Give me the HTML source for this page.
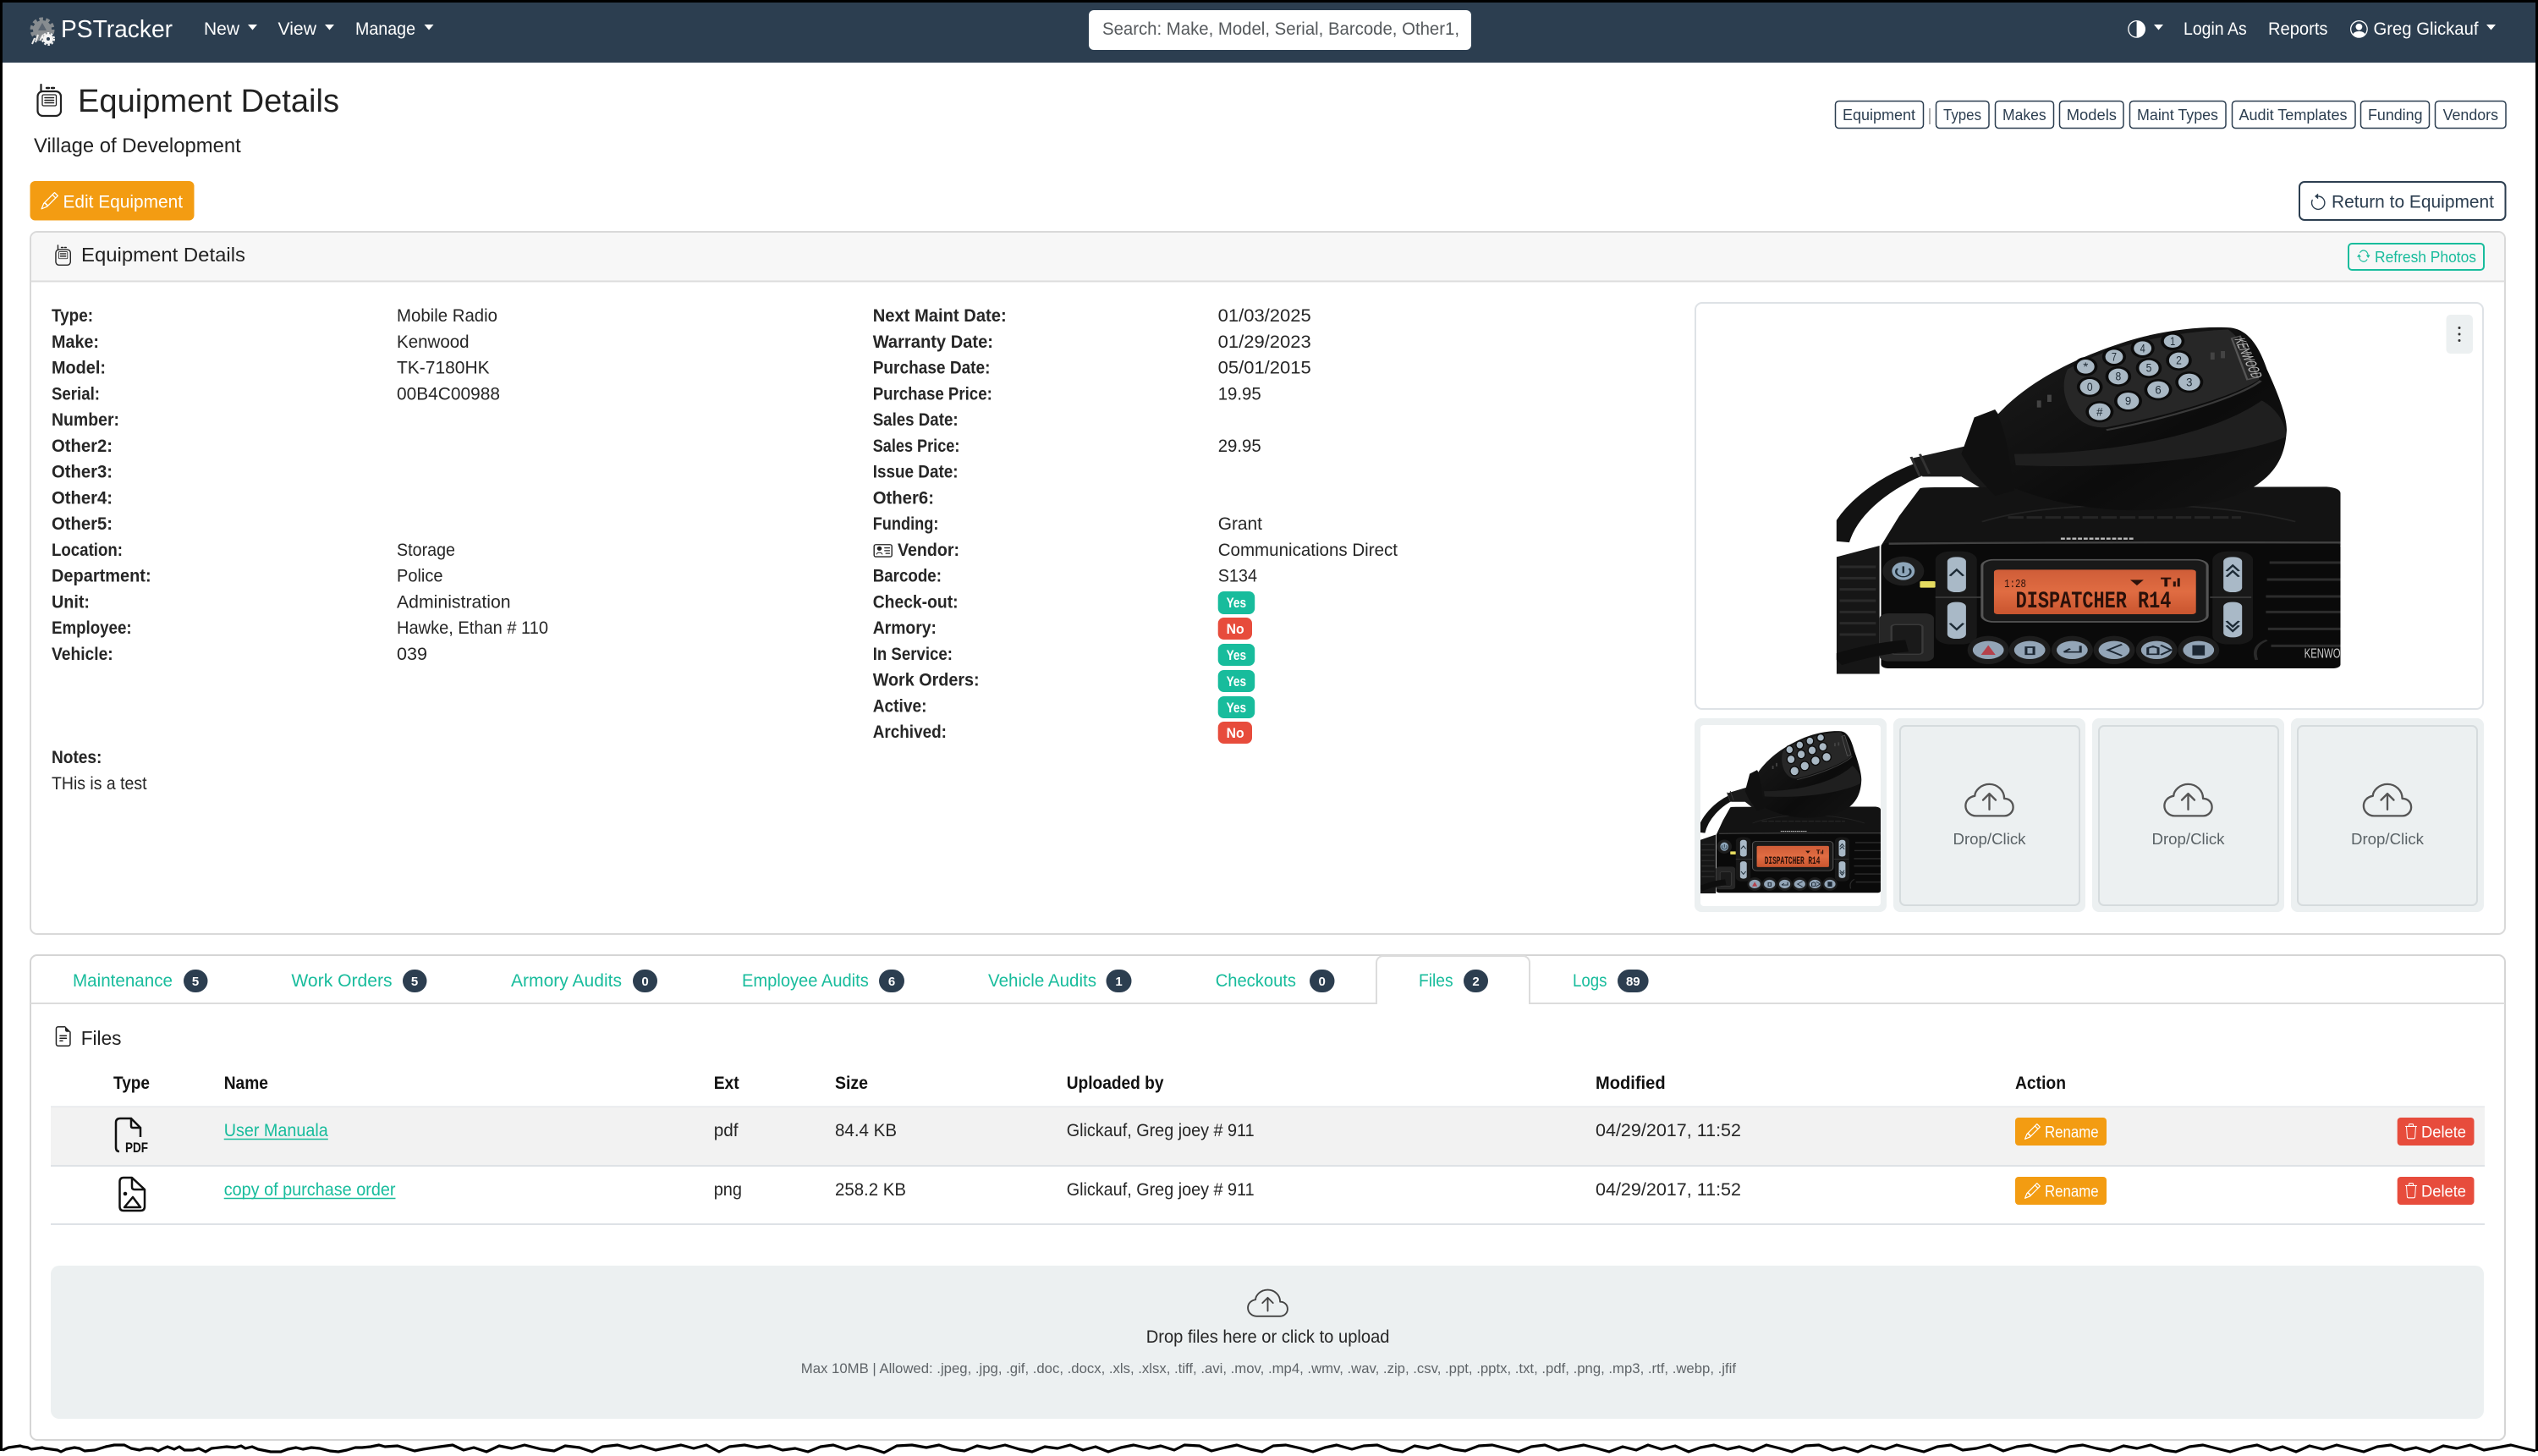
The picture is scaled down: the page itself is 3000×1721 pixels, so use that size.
<!DOCTYPE html>
<html lang="en">
<head>
<meta charset="utf-8">
<title>PSTracker - Equipment Details</title>
<style>
html,body{margin:0;padding:0;background:#fff;width:3000px;height:1721px;overflow:hidden}
svg{display:block}
path{fill-rule:evenodd}
text{font-family:"Liberation Sans",sans-serif;font-size:21.5px;fill:#262626}
.b{font-weight:700}
.n{fill:#fff}
.t{fill:#18bc9c}
.o{font-size:18.5px;fill:#2c3e50}
.h{font-weight:700;fill:#111;font-size:21px}
.bd{font-weight:700;font-size:15px;fill:#fff;text-anchor:middle}
.yn{font-weight:700;font-size:16.5px;fill:#fff}
.w{fill:#fff;font-size:19px}
.d{font-size:18.5px;fill:#5a6266}
.k{font-size:42px;fill:#1f2b35;text-anchor:middle}
</style>
</head>
<body>
<svg xmlns="http://www.w3.org/2000/svg" width="3000" height="1721" viewBox="0 0 3000 1721">
<defs>
<linearGradient id="lcd" x1="0" y1="0" x2="0" y2="1"><stop offset="0" stop-color="#cf5d38"/><stop offset=".5" stop-color="#e06c42"/><stop offset="1" stop-color="#c9552f"/></linearGradient>
<linearGradient id="mic" x1="0" y1="0" x2="1" y2="1"><stop offset="0" stop-color="#1c1c1c"/><stop offset=".6" stop-color="#0c0c0c"/><stop offset="1" stop-color="#141414"/></linearGradient>
<clipPath id="rc"><rect x="279" y="100" width="973" height="1240"/></clipPath>
<g id="cloud" fill="none" stroke-linecap="round" stroke-linejoin="round">
<path d="M4.730 3.720C5.600 2.970 6.750 2.500 8 2.500c2.600 0 4.690 2.020 4.690 4.550 1.600 0 2.810 1.100 2.810 2.720 0 1.500-1.250 2.730-2.810 2.730H3.780C1.950 12.500.5 11.080.5 9.320c0-1.600 1.200-2.850 2.900-3.100 0-.85.5-1.750 1.330-2.500z"/>
<path d="M8 10.500V5.500M6 7.500l2-2 2 2"/>
</g>
<path id="pencil" d="M12.146.146a.5.5 0 0 1 .708 0l3 3a.5.5 0 0 1 0 .708l-10 10a.5.5 0 0 1-.168.11l-5 2a.5.5 0 0 1-.65-.65l2-5a.5.5 0 0 1 .11-.168zM11.207 2.5 13.5 4.793 14.793 3.5 12.5 1.207zm1.586 3L10.5 3.207 4 9.707V10h.5a.5.5 0 0 1 .5.5v.5h.5a.5.5 0 0 1 .5.5v.5h.293zm-9.761 5.175-.106.106-1.528 3.821 3.821-1.528.106-.106A.5.5 0 0 1 5 12.5V12h-.5a.5.5 0 0 1-.5-.5V11h-.5a.5.5 0 0 1-.468-.325"/>
<path id="trash" d="M6.5 1h3a.5.5 0 0 1 .5.5v1H6v-1a.5.5 0 0 1 .5-.5M11 2.5v-1A1.5 1.5 0 0 0 9.5 0h-3A1.5 1.5 0 0 0 5 1.5v1H1.5a.5.5 0 0 0 0 1h.538l.853 10.66A2 2 0 0 0 4.885 16h6.23a2 2 0 0 0 1.994-1.84l.853-10.66h.538a.5.5 0 0 0 0-1zm1.958 1-.846 10.58a1 1 0 0 1-.997.92h-6.23a1 1 0 0 1-.997-.92L3.042 3.5z"/>
<g id="talkie" fill="none" stroke="#222" stroke-width="2.200" stroke-linecap="round" stroke-linejoin="round">
<path d="M5.500 0V7"/><path d="M12 4h3M18 4h3" stroke-width="2.400"/>
<rect x="1.500" y="8" width="27.500" height="29" rx="6"/>
<rect x="7" y="12" width="16.500" height="13" rx="1.500" stroke-width="1.300"/>
<path d="M10 15.500h10.500M10 18.500h10.500M10 21.500h10.500" stroke-width="1.500"/>
</g>
<g id="radio" clip-path="url(#rc)">
<path d="M445 610C370 660 300 760 282 870" fill="none" stroke="#121212" stroke-width="44"/>
<path d="M279 925L362 885V1340H279z" fill="#161616"/>
<path d="M285 960H355M285 1000H355M285 1040H355M285 1080H355M285 1120H355M285 1160H355M285 1200H355" stroke="#2a2a2a" stroke-width="9"/>
<path d="M425 575L545 525L600 705L580 705L520 640L445 640z" fill="#1a1a1a"/>
<path d="M423 570L440 640M440 560L458 630" stroke="#333" stroke-width="5"/>
<path d="M440 682Q445 678 470 678L1225 676Q1252 680 1252 700V885H365L400 780z" fill="#131313"/>
<path d="M560 800C700 720 1000 720 1165 800" fill="none" stroke="#232323" stroke-width="5"/>
<path d="M610 785H1060" stroke="#262626" stroke-width="9" stroke-dasharray="30 6"/>
<rect x="365" y="875" width="887" height="445" rx="14" fill="#0a0a0a"/>
<path d="M380 878Q700 872 1252 874" fill="none" stroke="#424242" stroke-width="7"/>
<path d="M712 860H852" stroke="#bbb" stroke-width="7" stroke-dasharray="8 3"/>
<path d="M545 430L585 402L622 500V690L585 708L540 620L520 560z" fill="#101010"/>
<path d="M590 420C640 320 720 230 840 160C900 125 980 105 1040 112C1075 120 1095 180 1110 260C1130 340 1150 430 1148 480C1145 560 1130 620 1090 670C1040 730 960 755 860 760C770 760 690 730 620 680C615 600 610 500 590 420z" fill="url(#mic)"/>
<path d="M725 260C790 190 900 130 1035 118C1060 150 1090 240 1095 295C1060 345 930 420 800 465C770 470 745 445 730 400C715 350 715 300 725 260z" fill="#272727"/>
<path d="M1100 370C1130 400 1150 460 1145 500C1100 540 900 620 625 600L622 560C800 560 1000 500 1100 370z" fill="#1f1f1f"/>
<path d="M1098 300C1060 355 930 430 800 475" fill="none" stroke="#3a3a3a" stroke-width="6"/>
<g fill="#0c0c0c">
<ellipse cx="928" cy="160" rx="23" ry="33"/><ellipse cx="870" cy="185" rx="23" ry="34"/><ellipse cx="815" cy="215" rx="23" ry="34"/><ellipse cx="760" cy="250" rx="23" ry="34"/>
<ellipse cx="940" cy="228" rx="25" ry="36"/><ellipse cx="882" cy="255" rx="25" ry="36"/><ellipse cx="823" cy="285" rx="25" ry="36"/><ellipse cx="768" cy="322" rx="25" ry="36"/>
<ellipse cx="960" cy="305" rx="27" ry="38"/><ellipse cx="900" cy="332" rx="27" ry="38"/><ellipse cx="842" cy="372" rx="27" ry="38"/><ellipse cx="787" cy="410" rx="27" ry="38"/>
</g>
<g fill="#a9b8c4">
<ellipse cx="928" cy="160" rx="17" ry="23"/><ellipse cx="870" cy="185" rx="17" ry="25"/><ellipse cx="815" cy="215" rx="17" ry="25"/><ellipse cx="760" cy="250" rx="17" ry="25"/>
<ellipse cx="940" cy="228" rx="19" ry="28"/><ellipse cx="882" cy="255" rx="19" ry="28"/><ellipse cx="823" cy="285" rx="19" ry="28"/><ellipse cx="768" cy="322" rx="19" ry="28"/>
<ellipse cx="960" cy="305" rx="21" ry="30"/><ellipse cx="900" cy="332" rx="21" ry="30"/><ellipse cx="842" cy="372" rx="21" ry="30"/><ellipse cx="787" cy="410" rx="21" ry="30"/>
</g>
<path d="M1042 150L1058 142L1092 288L1072 296z" fill="none" stroke="#555" stroke-width="4"/>
<path d="M1005 200V225M1025 195V220M670 370V395M690 350V375" stroke="#444" stroke-width="8"/>
<rect x="362" y="1125" width="105" height="170" rx="18" fill="#262626"/>
<rect x="385" y="1165" width="60" height="105" rx="8" fill="#1a1a1a" stroke="#3a3a3a" stroke-width="4"/>
<path d="M415 1240Q350 1250 279 1290" fill="none" stroke="#0e0e0e" stroke-width="42"/>
<ellipse cx="408" cy="975" rx="40" ry="52" fill="#1d1d1d"/>
<ellipse cx="408" cy="975" rx="22" ry="32" fill="#8ea6ba"/>
<path d="M408 958V982M397 966a14 18 0 1 0 22 0" fill="none" stroke="#1b2a35" stroke-width="4"/>
<rect x="440" y="1011" width="30" height="23" rx="3" fill="#e6dc60"/>
<rect x="470" y="905" width="80" height="330" rx="30" fill="#181818"/>
<rect x="1005" y="905" width="78" height="330" rx="30" fill="#181818"/>
<rect x="493" y="925" width="36" height="125" rx="16" fill="#a9b9c7"/>
<rect x="493" y="1085" width="36" height="130" rx="16" fill="#a9b9c7"/>
<rect x="1026" y="925" width="36" height="125" rx="16" fill="#a9b9c7"/>
<rect x="1026" y="1085" width="36" height="125" rx="16" fill="#a9b9c7"/>
<path d="M498 992L511 970L524 992M498 1160L511 1182L524 1160M1032 975L1044 955L1056 975M1032 995L1044 975L1056 995M1032 1152L1044 1172L1056 1152M1032 1168L1044 1188L1056 1168" fill="none" stroke="#1c2a35" stroke-width="5"/>
<path d="M470 1068H560M1000 1068H1080" stroke="#3a3a3a" stroke-width="5"/>
<rect x="560" y="935" width="435" height="220" rx="22" fill="#191919" stroke="#555" stroke-width="5"/>
<rect x="583" y="970" width="390" height="158" rx="8" fill="url(#lcd)"/>
<path d="M846 1006H872L859 1026z" fill="#2b110a"/>
<path d="M905 998H925V1004H918V1030H912V1004H905zM929 1012H934V1030H929zM937 1000H942V1030H937z" fill="#2b110a"/>
<path d="M1115 945H1252M1110 1005H1252M1108 1065H1252M1108 1120H1252M1112 1180H1252M1118 1240H1252" stroke="#2c2c2c" stroke-width="9"/>
<path d="M1090 1290Q1080 1240 1110 1220" fill="none" stroke="#2a2a2a" stroke-width="6"/>
<g fill="#1d1d1d">
<ellipse cx="572" cy="1255" rx="40" ry="50"/><ellipse cx="652" cy="1255" rx="40" ry="50"/><ellipse cx="734" cy="1255" rx="40" ry="50"/><ellipse cx="815" cy="1255" rx="40" ry="50"/><ellipse cx="897" cy="1255" rx="40" ry="50"/><ellipse cx="978" cy="1255" rx="40" ry="50"/>
</g>
<g fill="#93a5b7">
<ellipse cx="572" cy="1255" rx="30" ry="32"/><ellipse cx="652" cy="1255" rx="30" ry="32"/><ellipse cx="734" cy="1255" rx="30" ry="32"/><ellipse cx="815" cy="1255" rx="30" ry="32"/><ellipse cx="897" cy="1255" rx="30" ry="32"/><ellipse cx="978" cy="1255" rx="30" ry="32"/>
</g>
<path d="M572 1238L558 1272H586z" fill="#b5414b"/>
<path d="M645 1245H660V1270H645zM718 1262H750V1240M718 1262L730 1250M830 1235L803 1255L830 1275M880 1270V1248L890 1242L900 1248V1270zM905 1238L925 1255L905 1272" fill="none" stroke="#1c2733" stroke-width="5"/>
<rect x="966" y="1238" width="24" height="36" fill="#1c2733"/>
</g>
</defs>

<!-- page frame -->
<rect x="0" y="0" width="3000" height="1721" fill="#fff"/>

<!-- navbar -->
<rect x="3" y="3" width="2994" height="71" fill="#2c3e50"/>
<g>
<circle cx="50" cy="35" r="11" fill="#878c90"/>
<circle cx="50" cy="35" r="12.500" fill="none" stroke="#878c90" stroke-width="4" stroke-dasharray="4.500 3.350"/>
<path d="M45 36L50 27L55 36z" fill="#5a6470"/>
<path d="M41 45L38 52M45 41L42 50M51 41L47 48" stroke="#e8e8e8" stroke-width="2"/>
<circle cx="57" cy="46" r="6" fill="#f4f4f4"/>
<circle cx="57" cy="46" r="7" fill="none" stroke="#f4f4f4" stroke-width="2" stroke-dasharray="2.500 2"/>
<circle cx="57" cy="46" r="2" fill="#2c3e50"/>
</g>
<text class="n" x="72" y="44" style="font-size:29px" textLength="132" lengthAdjust="spacingAndGlyphs">PSTracker</text>
<text class="n" x="241" y="41" textLength="42" lengthAdjust="spacingAndGlyphs">New</text>
<path d="M293 29H304L298.500 35.500z" fill="#fff"/>
<text class="n" x="328.500" y="41" textLength="45.500" lengthAdjust="spacingAndGlyphs">View</text>
<path d="M384 29H395L389.500 35.500z" fill="#fff"/>
<text class="n" x="420" y="41" textLength="71" lengthAdjust="spacingAndGlyphs">Manage</text>
<path d="M501.500 29H512.500L507 35.500z" fill="#fff"/>
<rect x="1287" y="12" width="452" height="47" rx="6" fill="#fff"/>
<text x="1303" y="41" style="fill:#55595c" textLength="422" lengthAdjust="spacingAndGlyphs">Search: Make, Model, Serial, Barcode, Other1,</text>
<g transform="translate(2536,24) scale(-1.300,1.300)" fill="#fff"><path d="M8 15A7 7 0 1 0 8 1zm0 1A8 8 0 1 1 8 0a8 8 0 0 1 0 16"/></g>
<path d="M2546 29H2557L2551.500 35.500z" fill="#fff"/>
<text class="n" x="2581" y="41" textLength="74.700" lengthAdjust="spacingAndGlyphs">Login As</text>
<text class="n" x="2681" y="41" textLength="70.500" lengthAdjust="spacingAndGlyphs">Reports</text>
<g transform="translate(2778,24) scale(1.300)" fill="#fff"><path d="M11 6a3 3 0 1 1-6 0 3 3 0 0 1 6 0"/><path d="M0 8a8 8 0 1 1 16 0A8 8 0 0 1 0 8m8-7a7 7 0 0 0-5.468 11.370C3.242 11.226 4.805 10 8 10s4.757 1.225 5.468 2.370A7 7 0 0 0 8 1"/></g>
<text class="n" x="2805.500" y="41" textLength="124" lengthAdjust="spacingAndGlyphs">Greg Glickauf</text>
<path d="M2939 29H2950L2944.500 35.500z" fill="#fff"/>

<!-- title -->
<use href="#talkie" transform="translate(43,100)"/>
<text x="92" y="132" style="font-size:38px;fill:#222" textLength="309" lengthAdjust="spacingAndGlyphs">Equipment Details</text>
<text x="40" y="180" style="font-size:24px;fill:#222" textLength="244.700" lengthAdjust="spacingAndGlyphs">Village of Development</text>

<!-- top right buttons -->
<g fill="#fff" stroke="#2c3e50" stroke-width="1.500">
<rect x="2169.500" y="119.500" width="104" height="32" rx="4"/>
<rect x="2288.500" y="119.500" width="62.500" height="32" rx="4"/>
<rect x="2358.500" y="119.500" width="69" height="32" rx="4"/>
<rect x="2434.500" y="119.500" width="75.500" height="32" rx="4"/>
<rect x="2517.500" y="119.500" width="113.500" height="32" rx="4"/>
<rect x="2638.500" y="119.500" width="145.500" height="32" rx="4"/>
<rect x="2790.500" y="119.500" width="81" height="32" rx="4"/>
<rect x="2878.500" y="119.500" width="83.500" height="32" rx="4"/>
</g>
<path d="M2281 128V147" stroke="#999" stroke-width="1.500"/>
<text class="o" x="2178" y="142" textLength="86" lengthAdjust="spacingAndGlyphs">Equipment</text>
<text class="o" x="2297" y="142" textLength="45" lengthAdjust="spacingAndGlyphs">Types</text>
<text class="o" x="2367" y="142" textLength="51.600" lengthAdjust="spacingAndGlyphs">Makes</text>
<text class="o" x="2442.700" y="142" textLength="59.300" lengthAdjust="spacingAndGlyphs">Models</text>
<text class="o" x="2526" y="142" textLength="96" lengthAdjust="spacingAndGlyphs">Maint Types</text>
<text class="o" x="2646.500" y="142" textLength="128" lengthAdjust="spacingAndGlyphs">Audit Templates</text>
<text class="o" x="2799" y="142" textLength="64.500" lengthAdjust="spacingAndGlyphs">Funding</text>
<text class="o" x="2887.600" y="142" textLength="65.400" lengthAdjust="spacingAndGlyphs">Vendors</text>

<!-- action buttons -->
<rect x="35.500" y="214" width="194" height="46.500" rx="6" fill="#f39c12"/>
<use href="#pencil" transform="translate(48.500,227) scale(1.280)" fill="#fff"/>
<text class="n" x="74.500" y="245.500" textLength="141.500" lengthAdjust="spacingAndGlyphs">Edit Equipment</text>
<rect x="2718" y="215" width="243.500" height="45" rx="6" fill="#fff" stroke="#2c3e50" stroke-width="2"/>
<g transform="translate(2729,228.500) scale(1.400)" fill="#2c3e50"><path d="M8 3a5 5 0 1 1-4.546 2.914.5.5 0 0 0-.908-.417A6 6 0 1 0 8 2z"/><path d="M8 4.466V.534a.25.25 0 0 0-.41-.192L5.230 2.308a.25.25 0 0 0 0 .384l2.360 1.966A.25.25 0 0 0 8 4.466"/></g>
<text x="2756" y="245.500" style="fill:#2c3e50" textLength="192" lengthAdjust="spacingAndGlyphs">Return to Equipment</text>

<!-- equipment card -->
<rect x="36" y="274" width="2925" height="830" rx="8" fill="#fff" stroke="#d9d9d9" stroke-width="2"/>
<path d="M44 275H2953a7 7 0 0 1 7 7V332H37V282a7 7 0 0 1 7-7z" fill="#f7f7f7"/>
<path d="M36 332.500H2961" stroke="#dcdcdc" stroke-width="2"/>
<use href="#talkie" transform="translate(65,290) scale(.63)"/>
<text x="96" y="309" style="font-size:23.500px;fill:#222" textLength="194" lengthAdjust="spacingAndGlyphs">Equipment Details</text>
<rect x="2776" y="288" width="160" height="31" rx="4" fill="#f7f7f7" stroke="#18bc9c" stroke-width="2"/>
<g transform="translate(2786,293) scale(.98,1.200)" fill="#18bc9c"><path d="M11.534 7h3.932a.25.25 0 0 1 .192.41l-1.966 2.360a.25.25 0 0 1-.384 0l-1.966-2.360a.25.25 0 0 1 .192-.41m-11 2h3.932a.25.25 0 0 0 .192-.41L2.692 6.230a.25.25 0 0 0-.384 0L.342 8.590A.25.25 0 0 0 .534 9"/><path d="M8 3c-1.552 0-2.940.707-3.857 1.818a.5.5 0 1 1-.771-.636A6.002 6.002 0 0 1 13.917 7H12.900A5 5 0 0 0 8 3M3.100 9a5.002 5.002 0 0 0 8.757 2.182.5.5 0 1 1 .771.636A6.002 6.002 0 0 1 2.083 9z"/></g>
<text class="t" x="2807" y="310" style="font-size:18.5px" textLength="120" lengthAdjust="spacingAndGlyphs">Refresh Photos</text>

<!-- col 1 -->
<text class="b" x="61" y="380" textLength="49" lengthAdjust="spacingAndGlyphs">Type:</text>
<text class="b" x="61" y="410.750" textLength="56" lengthAdjust="spacingAndGlyphs">Make:</text>
<text class="b" x="61" y="441.500" textLength="64" lengthAdjust="spacingAndGlyphs">Model:</text>
<text class="b" x="61" y="472.250" textLength="57" lengthAdjust="spacingAndGlyphs">Serial:</text>
<text class="b" x="61" y="503" textLength="80" lengthAdjust="spacingAndGlyphs">Number:</text>
<text class="b" x="61" y="533.750" textLength="72" lengthAdjust="spacingAndGlyphs">Other2:</text>
<text class="b" x="61" y="564.500" textLength="72" lengthAdjust="spacingAndGlyphs">Other3:</text>
<text class="b" x="61" y="595.250" textLength="72" lengthAdjust="spacingAndGlyphs">Other4:</text>
<text class="b" x="61" y="626" textLength="72" lengthAdjust="spacingAndGlyphs">Other5:</text>
<text class="b" x="61" y="656.750" textLength="84" lengthAdjust="spacingAndGlyphs">Location:</text>
<text class="b" x="61" y="687.500" textLength="117.600" lengthAdjust="spacingAndGlyphs">Department:</text>
<text class="b" x="61" y="718.250" textLength="45" lengthAdjust="spacingAndGlyphs">Unit:</text>
<text class="b" x="61" y="749" textLength="94.600" lengthAdjust="spacingAndGlyphs">Employee:</text>
<text class="b" x="61" y="779.750" textLength="72.700" lengthAdjust="spacingAndGlyphs">Vehicle:</text>
<text class="b" x="61" y="902" textLength="59.400" lengthAdjust="spacingAndGlyphs">Notes:</text>
<text x="61" y="933" textLength="112.500" lengthAdjust="spacingAndGlyphs">THis is a test</text>
<text x="469" y="380" textLength="119" lengthAdjust="spacingAndGlyphs">Mobile Radio</text>
<text x="469" y="410.750" textLength="85.600" lengthAdjust="spacingAndGlyphs">Kenwood</text>
<text x="469" y="441.500" textLength="109.600" lengthAdjust="spacingAndGlyphs">TK-7180HK</text>
<text x="469" y="472.250" textLength="122" lengthAdjust="spacingAndGlyphs">00B4C00988</text>
<text x="469" y="656.750" textLength="69" lengthAdjust="spacingAndGlyphs">Storage</text>
<text x="469" y="687.500" textLength="54.500" lengthAdjust="spacingAndGlyphs">Police</text>
<text x="469" y="718.250" textLength="134.600" lengthAdjust="spacingAndGlyphs">Administration</text>
<text x="469" y="749" textLength="179" lengthAdjust="spacingAndGlyphs">Hawke, Ethan # 110</text>
<text x="469" y="779.750" textLength="36" lengthAdjust="spacingAndGlyphs">039</text>

<!-- col 2 -->
<text class="b" x="1031.700" y="380" textLength="158" lengthAdjust="spacingAndGlyphs">Next Maint Date:</text>
<text class="b" x="1031.700" y="410.750" textLength="142.300" lengthAdjust="spacingAndGlyphs">Warranty Date:</text>
<text class="b" x="1031.700" y="441.500" textLength="138.800" lengthAdjust="spacingAndGlyphs">Purchase Date:</text>
<text class="b" x="1031.700" y="472.250" textLength="141.100" lengthAdjust="spacingAndGlyphs">Purchase Price:</text>
<text class="b" x="1031.700" y="503" textLength="100.900" lengthAdjust="spacingAndGlyphs">Sales Date:</text>
<text class="b" x="1031.700" y="533.750" textLength="102.700" lengthAdjust="spacingAndGlyphs">Sales Price:</text>
<text class="b" x="1031.700" y="564.500" textLength="100.900" lengthAdjust="spacingAndGlyphs">Issue Date:</text>
<text class="b" x="1031.700" y="595.250" textLength="72.300" lengthAdjust="spacingAndGlyphs">Other6:</text>
<text class="b" x="1031.700" y="626" textLength="77.700" lengthAdjust="spacingAndGlyphs">Funding:</text>
<g transform="translate(1032.500,640.500) scale(1.400,1.300)" fill="#222"><path d="M5 8a2 2 0 1 0 0-4 2 2 0 0 0 0 4m4-2.500a.5.5 0 0 1 .5-.5h4a.5.5 0 0 1 0 1h-4a.5.5 0 0 1-.5-.5M9 8a.5.5 0 0 1 .5-.5h4a.5.5 0 0 1 0 1h-4A.5.5 0 0 1 9 8m1 2.500a.5.5 0 0 1 .5-.5h3a.5.5 0 0 1 0 1h-3a.5.5 0 0 1-.5-.5"/><path d="M2 2a2 2 0 0 0-2 2v8a2 2 0 0 0 2 2h12a2 2 0 0 0 2-2V4a2 2 0 0 0-2-2zM1 4a1 1 0 0 1 1-1h12a1 1 0 0 1 1 1v8a1 1 0 0 1-1 1H2a1 1 0 0 1-1-1z"/><path d="M2.500 11.500c.3-1.200 1.300-1.800 2.500-1.800s2.200.6 2.500 1.800" fill="none" stroke="#222" stroke-width=".7"/></g>
<text class="b" x="1061" y="656.750" textLength="73" lengthAdjust="spacingAndGlyphs">Vendor:</text>
<text class="b" x="1031.700" y="687.500" textLength="81.300" lengthAdjust="spacingAndGlyphs">Barcode:</text>
<text class="b" x="1031.700" y="718.250" textLength="100.900" lengthAdjust="spacingAndGlyphs">Check-out:</text>
<text class="b" x="1031.700" y="749" textLength="75.300" lengthAdjust="spacingAndGlyphs">Armory:</text>
<text class="b" x="1031.700" y="779.750" textLength="94.300" lengthAdjust="spacingAndGlyphs">In Service:</text>
<text class="b" x="1031.700" y="810.500" textLength="125.900" lengthAdjust="spacingAndGlyphs">Work Orders:</text>
<text class="b" x="1031.700" y="841.250" textLength="63.800" lengthAdjust="spacingAndGlyphs">Active:</text>
<text class="b" x="1031.700" y="872" textLength="87.300" lengthAdjust="spacingAndGlyphs">Archived:</text>

<text x="1439.700" y="380" textLength="110" lengthAdjust="spacingAndGlyphs">01/03/2025</text>
<text x="1439.700" y="410.750" textLength="110" lengthAdjust="spacingAndGlyphs">01/29/2023</text>
<text x="1439.700" y="441.500" textLength="110" lengthAdjust="spacingAndGlyphs">05/01/2015</text>
<text x="1439.700" y="472.250" textLength="51" lengthAdjust="spacingAndGlyphs">19.95</text>
<text x="1439.700" y="533.750" textLength="51" lengthAdjust="spacingAndGlyphs">29.95</text>
<text x="1439.700" y="626" textLength="52.300" lengthAdjust="spacingAndGlyphs">Grant</text>
<text x="1439.700" y="656.750" textLength="212.300" lengthAdjust="spacingAndGlyphs">Communications Direct</text>
<text x="1439.700" y="687.500" textLength="46.300" lengthAdjust="spacingAndGlyphs">S134</text>

<rect x="1439.700" y="699" width="43.500" height="27" rx="7" fill="#18bc9c"/><text class="yn" x="1449.600" y="718" textLength="23.500" lengthAdjust="spacingAndGlyphs">Yes</text>
<rect x="1439.700" y="730" width="40.300" height="26" rx="7" fill="#e74c3c"/><text class="yn" x="1449.600" y="749" textLength="21" lengthAdjust="spacingAndGlyphs">No</text>
<rect x="1439.700" y="761" width="43.500" height="26" rx="7" fill="#18bc9c"/><text class="yn" x="1449.600" y="780" textLength="23.500" lengthAdjust="spacingAndGlyphs">Yes</text>
<rect x="1439.700" y="792" width="43.500" height="26" rx="7" fill="#18bc9c"/><text class="yn" x="1449.600" y="811" textLength="23.500" lengthAdjust="spacingAndGlyphs">Yes</text>
<rect x="1439.700" y="823" width="43.500" height="26" rx="7" fill="#18bc9c"/><text class="yn" x="1449.600" y="842" textLength="23.500" lengthAdjust="spacingAndGlyphs">Yes</text>
<rect x="1439.700" y="853" width="40.300" height="26" rx="7" fill="#e74c3c"/><text class="yn" x="1449.600" y="872" textLength="21" lengthAdjust="spacingAndGlyphs">No</text>

<!-- main image -->
<rect x="2004" y="358" width="931" height="480" rx="8" fill="#fff" stroke="#dee2e6" stroke-width="2"/>
<svg x="2000" y="350" width="960" height="500" viewBox="0 0 1568 1500" preserveAspectRatio="none">
<use href="#radio"/>
<text x="625" y="1104" style="font-family:'Liberation Mono',monospace;font-weight:700;font-size:84px;fill:#2b110a" textLength="300" lengthAdjust="spacingAndGlyphs">DISPATCHER R14</text>
<text x="603" y="1032" style="font-family:'Liberation Mono',monospace;font-size:42px;fill:#2b110a" textLength="42" lengthAdjust="spacingAndGlyphs">1:28</text>
<text x="1182" y="1282" style="font-size:46px;fill:#ccc" textLength="70" lengthAdjust="spacingAndGlyphs">KENWO</text>
<text x="1047" y="152" transform="rotate(76 1047 152)" style="font-size:30px;fill:#bbb" textLength="145" lengthAdjust="spacingAndGlyphs">KENWOOD</text>
<text class="k" x="928" y="174" textLength="10" lengthAdjust="spacingAndGlyphs">1</text>
<text class="k" x="870" y="199" textLength="10" lengthAdjust="spacingAndGlyphs">4</text>
<text class="k" x="815" y="229" textLength="10" lengthAdjust="spacingAndGlyphs">7</text>
<text class="k" x="760" y="264" textLength="10" lengthAdjust="spacingAndGlyphs">*</text>
<text class="k" x="940" y="242" textLength="11" lengthAdjust="spacingAndGlyphs">2</text>
<text class="k" x="882" y="269" textLength="11" lengthAdjust="spacingAndGlyphs">5</text>
<text class="k" x="823" y="299" textLength="11" lengthAdjust="spacingAndGlyphs">8</text>
<text class="k" x="768" y="336" textLength="11" lengthAdjust="spacingAndGlyphs">0</text>
<text class="k" x="960" y="319" textLength="12" lengthAdjust="spacingAndGlyphs">3</text>
<text class="k" x="900" y="346" textLength="12" lengthAdjust="spacingAndGlyphs">6</text>
<text class="k" x="842" y="386" textLength="12" lengthAdjust="spacingAndGlyphs">9</text>
<text class="k" x="787" y="424" textLength="12" lengthAdjust="spacingAndGlyphs">#</text>
</svg>
<rect x="2891.500" y="372" width="31.500" height="46" rx="5" fill="#ecf0f1"/>
<circle cx="2907" cy="387.500" r="1.500" fill="#333"/><circle cx="2907" cy="395" r="1.500" fill="#333"/><circle cx="2907" cy="402.500" r="1.500" fill="#333"/>

<!-- thumbs -->
<rect x="2003" y="849" width="227" height="229" rx="8" fill="#ecf0f1"/>
<rect x="2238" y="849" width="227" height="229" rx="8" fill="#ecf0f1"/>
<rect x="2473" y="849" width="227" height="229" rx="8" fill="#ecf0f1"/>
<rect x="2708" y="849" width="228" height="229" rx="8" fill="#ecf0f1"/>
<rect x="2010" y="857" width="213" height="214" rx="4" fill="#fff"/>
<svg x="2010" y="864" width="213" height="192" viewBox="279 110 973 1215" preserveAspectRatio="none">
<use href="#radio"/>
<text x="625" y="1104" style="font-family:'Liberation Mono',monospace;font-weight:700;font-size:84px;fill:#2b110a" textLength="300" lengthAdjust="spacingAndGlyphs">DISPATCHER R14</text>
</svg>
<g fill="#ecf0f1" stroke="#d5dbdd" stroke-width="2">
<rect x="2246" y="858" width="212" height="212" rx="6"/>
<rect x="2481" y="858" width="212" height="212" rx="6"/>
<rect x="2716" y="858" width="212" height="212" rx="6"/>
</g>
<use href="#cloud" transform="translate(2321.500,917.500) scale(3.750)" stroke="#555" stroke-width=".62"/>
<use href="#cloud" transform="translate(2556.500,917.500) scale(3.750)" stroke="#555" stroke-width=".62"/>
<use href="#cloud" transform="translate(2792,917.500) scale(3.750)" stroke="#555" stroke-width=".62"/>
<text class="d" x="2308.500" y="998" textLength="86" lengthAdjust="spacingAndGlyphs">Drop/Click</text>
<text class="d" x="2543.500" y="998" textLength="86" lengthAdjust="spacingAndGlyphs">Drop/Click</text>
<text class="d" x="2779" y="998" textLength="86" lengthAdjust="spacingAndGlyphs">Drop/Click</text>

<!-- tabs card -->
<rect x="36" y="1129" width="2925" height="573" rx="8" fill="#fff" stroke="#d5d5d5" stroke-width="2"/>
<path d="M36 1186H1627M1808 1186H2961" stroke="#dcdcdc" stroke-width="2"/>
<path d="M1627 1187V1138a8 8 0 0 1 8-8H1800a8 8 0 0 1 8 8V1187" fill="#fff" stroke="#dcdcdc" stroke-width="2"/>
<text class="t" x="86" y="1166" textLength="118" lengthAdjust="spacingAndGlyphs">Maintenance</text>
<rect x="217" y="1146" width="28.500" height="27" rx="13.500" fill="#2c3e50"/><text class="bd" x="231" y="1165">5</text>
<text class="t" x="344.400" y="1166" textLength="119.200" lengthAdjust="spacingAndGlyphs">Work Orders</text>
<rect x="476" y="1146" width="28.500" height="27" rx="13.500" fill="#2c3e50"/><text class="bd" x="490" y="1165">5</text>
<text class="t" x="604" y="1166" textLength="131" lengthAdjust="spacingAndGlyphs">Armory Audits</text>
<rect x="748" y="1146" width="29" height="27" rx="13.500" fill="#2c3e50"/><text class="bd" x="762.500" y="1165">0</text>
<text class="t" x="877" y="1166" textLength="149.800" lengthAdjust="spacingAndGlyphs">Employee Audits</text>
<rect x="1039" y="1146" width="30" height="27" rx="13.500" fill="#2c3e50"/><text class="bd" x="1054" y="1165">6</text>
<text class="t" x="1168" y="1166" textLength="128" lengthAdjust="spacingAndGlyphs">Vehicle Audits</text>
<rect x="1307.500" y="1146" width="30" height="27" rx="13.500" fill="#2c3e50"/><text class="bd" x="1322.500" y="1165">1</text>
<text class="t" x="1436.700" y="1166" textLength="95.300" lengthAdjust="spacingAndGlyphs">Checkouts</text>
<rect x="1548" y="1146" width="29.500" height="27" rx="13.500" fill="#2c3e50"/><text class="bd" x="1562.700" y="1165">0</text>
<text class="t" x="1677" y="1166" textLength="40.600" lengthAdjust="spacingAndGlyphs">Files</text>
<rect x="1730" y="1146" width="29" height="27" rx="13.500" fill="#2c3e50"/><text class="bd" x="1744.500" y="1165">2</text>
<text class="t" x="1859" y="1166" textLength="40.500" lengthAdjust="spacingAndGlyphs">Logs</text>
<rect x="1912" y="1146" width="36.600" height="27" rx="13.500" fill="#2c3e50"/><text class="bd" x="1930.300" y="1165">89</text>

<!-- files -->
<g transform="translate(62.700,1213) scale(1.500)" fill="#222"><path d="M5.500 7a.5.5 0 0 0 0 1h5a.5.5 0 0 0 0-1zM5 9.500a.5.5 0 0 1 .5-.5h5a.5.5 0 0 1 0 1h-5a.5.5 0 0 1-.5-.5m0 2a.5.5 0 0 1 .5-.5h2a.5.5 0 0 1 0 1h-2a.5.5 0 0 1-.5-.5"/><path d="M9.500 0H4a2 2 0 0 0-2 2v12a2 2 0 0 0 2 2h8a2 2 0 0 0 2-2V4.500zm0 1v2A1.500 1.500 0 0 0 11 4.500h2V14a1 1 0 0 1-1 1H4a1 1 0 0 1-1-1V2a1 1 0 0 1 1-1z"/></g>
<text x="95.700" y="1235" style="font-size:23.500px;fill:#222" textLength="47.800" lengthAdjust="spacingAndGlyphs">Files</text>

<text class="h" x="134" y="1287" textLength="43" lengthAdjust="spacingAndGlyphs">Type</text>
<text class="h" x="264.700" y="1287" textLength="52.300" lengthAdjust="spacingAndGlyphs">Name</text>
<text class="h" x="843.700" y="1287" textLength="30" lengthAdjust="spacingAndGlyphs">Ext</text>
<text class="h" x="987" y="1287" textLength="39" lengthAdjust="spacingAndGlyphs">Size</text>
<text class="h" x="1260.700" y="1287" textLength="114.800" lengthAdjust="spacingAndGlyphs">Uploaded by</text>
<text class="h" x="1886" y="1287" textLength="82.600" lengthAdjust="spacingAndGlyphs">Modified</text>
<text class="h" x="2382" y="1287" textLength="60" lengthAdjust="spacingAndGlyphs">Action</text>

<rect x="60" y="1308" width="2877" height="69" fill="#f2f2f2"/>
<path d="M60 1308H2937" stroke="#dee2e6" stroke-width="1"/>
<path d="M60 1378H2937" stroke="#dee2e6" stroke-width="2"/>
<path d="M60 1447H2937" stroke="#dee2e6" stroke-width="2"/>

<path d="M166 1344V1333L155 1322H142Q137 1322 137 1327V1356Q137 1361 141 1361M155 1322V1331Q155 1333 157 1333H166" fill="none" stroke="#111" stroke-width="2.500"/>
<text x="148" y="1362" style="font-size:17px;font-weight:700;fill:#111" textLength="27" lengthAdjust="spacingAndGlyphs">PDF</text>
<path d="M146 1392H156L171 1406V1426Q171 1431 166 1431H146Q141.500 1431 141.500 1426V1397Q141.500 1392 146 1392zM156 1392V1403Q156 1406 159 1406H171M147 1427L157 1415L166 1427z" fill="none" stroke="#111" stroke-width="2.500" stroke-linejoin="round"/>
<circle cx="148" cy="1411" r="2.300" fill="#111"/>

<text class="t" x="264.700" y="1343" textLength="123.100" lengthAdjust="spacingAndGlyphs">User Manuala</text>
<path d="M264.700 1346.500H387.800" stroke="#18bc9c" stroke-width="1.500"/>
<text x="843.700" y="1343" textLength="28.800" lengthAdjust="spacingAndGlyphs">pdf</text>
<text x="987" y="1343" textLength="73" lengthAdjust="spacingAndGlyphs">84.4 KB</text>
<text x="1260.700" y="1343" textLength="221.900" lengthAdjust="spacingAndGlyphs">Glickauf, Greg joey # 911</text>
<text x="1886" y="1343" textLength="172" lengthAdjust="spacingAndGlyphs">04/29/2017, 11:52</text>

<text class="t" x="264.700" y="1413" textLength="202.800" lengthAdjust="spacingAndGlyphs">copy of purchase order</text>
<path d="M264.700 1416.500H467.500" stroke="#18bc9c" stroke-width="1.500"/>
<text x="843.700" y="1413" textLength="33.300" lengthAdjust="spacingAndGlyphs">png</text>
<text x="987" y="1413" textLength="84" lengthAdjust="spacingAndGlyphs">258.2 KB</text>
<text x="1260.700" y="1413" textLength="221.900" lengthAdjust="spacingAndGlyphs">Glickauf, Greg joey # 911</text>
<text x="1886" y="1413" textLength="172" lengthAdjust="spacingAndGlyphs">04/29/2017, 11:52</text>

<rect x="2382" y="1321" width="108" height="33" rx="4" fill="#f39c12"/>
<use href="#pencil" transform="translate(2393,1328) scale(1.180)" fill="#fff"/>
<text class="w" x="2417" y="1344.500" textLength="63.600" lengthAdjust="spacingAndGlyphs">Rename</text>
<rect x="2833.700" y="1321" width="90.800" height="33" rx="4" fill="#e74c3c"/>
<use href="#trash" transform="translate(2842,1328) scale(1,1.150)" fill="#fff"/>
<text class="w" x="2862" y="1344.500" textLength="53" lengthAdjust="spacingAndGlyphs">Delete</text>

<rect x="2382" y="1391" width="108" height="33" rx="4" fill="#f39c12"/>
<use href="#pencil" transform="translate(2393,1398) scale(1.180)" fill="#fff"/>
<text class="w" x="2417" y="1414.500" textLength="63.600" lengthAdjust="spacingAndGlyphs">Rename</text>
<rect x="2833.700" y="1391" width="90.800" height="33" rx="4" fill="#e74c3c"/>
<use href="#trash" transform="translate(2842,1398) scale(1,1.150)" fill="#fff"/>
<text class="w" x="2862" y="1414.500" textLength="53" lengthAdjust="spacingAndGlyphs">Delete</text>

<!-- upload -->
<rect x="60" y="1496" width="2876" height="181" rx="10" fill="#ecf0f1"/>
<use href="#cloud" transform="translate(1473.500,1516.700) scale(3.125)" stroke="#444" stroke-width=".6"/>
<text x="1354.700" y="1587" textLength="287.800" lengthAdjust="spacingAndGlyphs">Drop files here or click to upload</text>
<text x="946.800" y="1623" style="font-size:17px;fill:#5f6468" textLength="1105.200" lengthAdjust="spacingAndGlyphs">Max 10MB | Allowed: .jpeg, .jpg, .gif, .doc, .docx, .xls, .xlsx, .tiff, .avi, .mov, .mp4, .wmv, .wav, .zip, .csv, .ppt, .pptx, .txt, .pdf, .png, .mp3, .rtf, .webp, .jfif</text>

<!-- frame + torn edge -->
<rect x="0" y="0" width="3000" height="3" fill="#000"/>
<rect x="0" y="0" width="3" height="1715" fill="#000"/>
<rect x="2997" y="0" width="3" height="1715" fill="#000"/>
<path fill="none" stroke="#000" stroke-width="3.200" stroke-linejoin="round" d="M3 1714L10 1711 24 1709 27 1710 33 1711 37 1713 50 1711 53 1712 68 1714 72 1716 78 1713 88 1711 94 1712 100 1715 112 1714 125 1710 135 1708 147 1708 155 1712 165 1714 172 1712 180 1712 187 1715 193 1712 198 1710 206 1713 212 1710 218 1714 228 1714 235 1712 243 1716 250 1712 268 1710 278 1711 285 1709 290 1712 298 1710 305 1713 320 1716 332 1716 340 1713 350 1711 358 1713 368 1711 378 1712 390 1715 400 1716 410 1714 420 1711 428 1711 438 1710 448 1708 455 1710 470 1709 480 1712 490 1715 500 1713 520 1710 535 1708 548 1714 560 1711 575 1716 590 1709 605 1712 620 1708 640 1713 655 1715 668 1709 685 1711 700 1716 712 1710 730 1708 745 1712 758 1709 775 1714 790 1711 805 1708 820 1712 835 1708 850 1716 862 1710 880 1708 895 1711 910 1709 925 1714 940 1712 955 1716 970 1710 985 1708 1000 1713 1015 1709 1030 1712 1045 1717 1060 1709 1078 1708 1095 1711 1110 1708 1125 1713 1140 1715 1155 1709 1170 1712 1188 1708 1205 1713 1220 1716 1235 1710 1250 1712 1265 1708 1280 1714 1295 1710 1310 1716 1325 1711 1340 1708 1358 1712 1372 1709 1388 1714 1400 1708 1418 1709 1432 1715 1448 1711 1462 1708 1478 1713 1492 1716 1505 1709 1520 1708 1538 1712 1552 1716 1566 1711 1580 1708 1598 1713 1612 1709 1628 1708 1644 1714 1658 1716 1672 1709 1688 1712 1702 1708 1718 1713 1732 1715 1748 1709 1764 1708 1780 1712 1795 1716 1810 1710 1826 1708 1842 1714 1856 1711 1872 1708 1888 1712 1902 1716 1918 1710 1934 1714 1948 1708 1964 1713 1980 1709 1996 1716 2010 1711 2026 1708 2042 1713 2056 1710 2072 1715 2088 1708 2104 1712 2118 1716 2134 1709 2150 1708 2166 1714 2180 1711 2196 1716 2212 1709 2228 1713 2242 1708 2258 1712 2274 1716 2290 1710 2306 1708 2320 1714 2336 1712 2352 1708 2368 1715 2384 1710 2400 1708 2416 1713 2430 1716 2446 1710 2462 1708 2478 1712 2494 1715 2510 1709 2526 1712 2542 1708 2558 1714 2572 1716 2588 1710 2604 1708 2620 1712 2636 1716 2652 1711 2668 1708 2684 1714 2698 1710 2714 1716 2730 1709 2746 1713 2762 1708 2778 1712 2794 1716 2810 1710 2826 1708 2842 1714 2856 1711 2872 1716 2888 1709 2904 1712 2920 1708 2936 1714 2952 1711 2968 1708 2984 1712 2997 1715"/>
</svg>
</body>
</html>
